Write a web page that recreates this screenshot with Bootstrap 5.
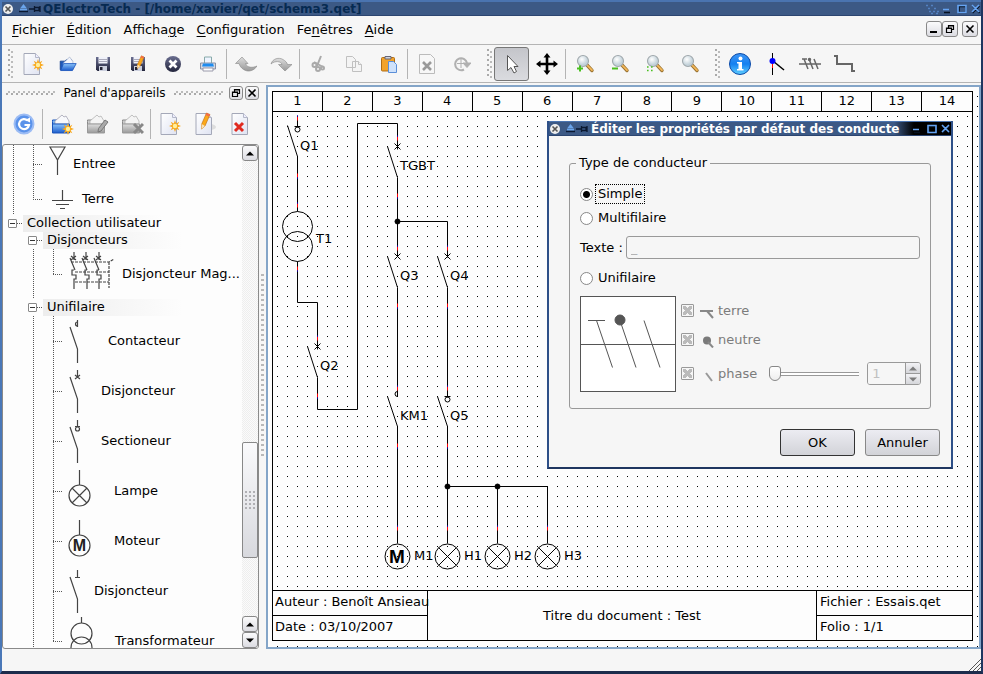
<!DOCTYPE html>
<html lang="fr">
<head>
<meta charset="utf-8">
<meta name="viewport" content="width=device-width, initial-scale=1">
<title>QElectroTech</title>
<link href="https://cdn.jsdelivr.net/npm/bootstrap@5.3.0/dist/css/bootstrap.min.css" rel="stylesheet">
<style>
  body { font-family: "DejaVu Sans", sans-serif; font-size: 13px; line-height: 16px; color: #000; background: #f6f6f6; }
  button { font: inherit; color: inherit; }
  .app-window { border: solid #4a78b8; border-width: 0 2px 3px; border-right-color: #1f3660; border-bottom-color: #1c2c4c; }
  .titlebar { height: 16px; flex: none; background: #3c5985; border-top: 2px solid #4a74b0; border-bottom: 1px solid #2c4570; font-weight: 700; font-size: 12px; }
  .titlebar button { border: 0; padding: 0; background: none; line-height: 0; }
  .titlebar svg { flex: none; }
  .app-title { color: #062a52; padding-left: 1px; }
  .menubar { height: 29px; flex: none; border-bottom: 1px solid #b4b4b4; padding-left: 10px; gap: 12px; }
  .menubar a { color: #000; text-decoration: none; }
  .key { text-decoration: underline; text-underline-offset: 2px; }
  .mini { border: 1px solid #888; border-radius: 3px; background: linear-gradient(#fbfbfc, #dcdce2); padding: 0; line-height: 0; flex: none; }
  .mdi { padding: 0 3px 3px 0; }
  .mdi .mini { width: 16px; height: 16px; }
  .toolbar { height: 38px; flex: none; border-bottom: 1px solid #b4b4b4; }
  .tool { width: 35px; height: 34px; border: 1px solid transparent; background: none; padding: 0; border-radius: 3px; flex: none; line-height: 0; }
  .tool.pressed { border-color: #777; background: linear-gradient(#c4c5ca, #dadbdf); }
  .grip { width: 6px; height: 30px; margin: 0 1px 0 8px; flex: none;
    background: radial-gradient(circle at 1px 1px, #aaa 1px, transparent 1px) 0 0/6px 5px, radial-gradient(circle at 4px 3px, #bbb 1px, transparent 1px) 0 0/6px 5px; }
  .grip:first-child { margin-left: 6px; }
  .sep { width: 1px; height: 30px; background: #b4b4b4; margin: 0 1px; flex: none; }
  .work { flex: 1 1 0; min-height: 0; }
  .dock { width: 257px; flex: none; }
  .dock-head { height: 20px; flex: none; gap: 2px; }
  .dock-head .mini { width: 14px; height: 14px; }
  .dock-name { font-size: 12px; padding: 0 6px; }
  .hatch { height: 5px; background: radial-gradient(circle at 1px 3px, #aaa 1px, transparent 1px) 0 0/5px 5px, radial-gradient(circle at 3px 1px, #bbb 1px, transparent 1px) 0 0/5px 5px; }
  .dock-tools { height: 41px; flex: none; }
  .tree-box { border: 1px solid #8a8a8a; border-radius: 3px; background: #fdfdfd; flex: 1 1 0; min-height: 0; }
  .tree-row { height: 50px; flex: none; }
  .row-head { height: 17px; }
  .row-head .caption { height: 17px; width: 140px; padding-left: 4px; background: linear-gradient(90deg, #ededed, #fdfdfd); white-space: nowrap; }
  .row-entree { height: 38px; }
  .row-terre { height: 32px; }
  .guide { width: 20px; align-self: stretch; flex: none; background-repeat: no-repeat;
    --v: repeating-linear-gradient(#555 0 1px, transparent 1px 2px);
    --h: repeating-linear-gradient(90deg, #555 0 1px, transparent 1px 2px); }
  .g-line { background-image: var(--v); background-size: 1px 100%; background-position: 10px 0; }
  .g-tee { background-image: var(--v), var(--h); background-size: 1px 100%, 10px 1px; background-position: 10px 0, 10px 50%; }
  .g-end { background-image: var(--v), var(--h); background-size: 1px 50%, 10px 1px; background-position: 10px 0, 10px 50%; }
  .g-box { background-image: var(--h); background-size: 6px 1px; background-position: 14px 50%; display: flex; align-items: center; padding-left: 5px; }
  .fold { width: 9px; height: 9px; border: 1px solid #888; border-radius: 1px; background: #fff; padding: 0; display: flex; align-items: center; justify-content: center; }
  .fold::before { content: ""; width: 5px; height: 1px; background: #333; }
  .sym { fill: none; stroke: #444; stroke-width: 1.2; flex: none; }
  .motor-letter { font-family: "Liberation Sans", sans-serif; font-weight: 700; }
  .scrollbar { width: 16px; flex: none; background: repeating-conic-gradient(#eee 0 25%, #fbfbfb 0 50%) 0 0/2px 2px; }
  .scrollbar button { width: 16px; height: 16px; }
  .thumb { height: 116px; border: 1px solid #888; border-radius: 2px; background: linear-gradient(#fafafc, #d8d9de); }
  .thumb i { width: 12px; height: 20px; background: radial-gradient(circle, #b0b0b4 1px, transparent 1px) 0 0/4px 4px; }
  .g281 { flex: 281 0 0; } .g58 { flex: 58 0 0; }
  .splitter { width: 7px; flex: none; }
  .splitter i { width: 3px; height: 184px; background: repeating-linear-gradient(#b8b8b8 0 2px, transparent 2px 5px); }
  .canvas { border: 2px solid #84a5c8; margin-top: 2px; padding: 4px 6px 6px 4px; min-width: 0;
    background: conic-gradient(from 270deg at 1px 1px, #000 90deg, transparent 0) 9px 9px/10px 10px, #fdfdfd; }
  .folio { border: 1px solid #000; }
  .cols { height: 20px; flex: none; display: grid; grid-template-columns: repeat(14, 1fr); background: #fdfdfd; border-bottom: 1px solid #000; }
  .cols span { text-align: center; border-right: 1px solid #000; line-height: 18px; }
  .cols span:last-child { border: 0; }
  .drawing { flex: 1 1 0; min-height: 0; width: 100%; display: block; }
  .cartouche { height: 50px; flex: none; border-top: 1px solid #000; background: #fdfdfd; }
  .cartouche .cell-a { width: 155px; border-right: 1px solid #000; }
  .cartouche .cell-b { width: 156px; border-left: 1px solid #000; }
  .cartouche .half { height: 24px; line-height: 22px; padding-left: 3px; white-space: nowrap; }
  .cartouche .cell-a .half { padding-left: 2px; }
  .cartouche .half + .half { height: 25px; border-top: 1px solid #000; }
  .statusbar { height: 22px; flex: none; }
  .dialog-window { position: absolute; top: 34px; left: 279px; width: 406px; background: #f6f6f6; border: 2px solid #2e5088; border-top: 0; border-bottom-color: #1f3660; }
  .dialog-window .titlebar { border-top-width: 1px; height: 15px; background: linear-gradient(90deg, #3c5985 345px, #000 365px); color: #fff; }
  .dialog-title { padding-left: 2px; white-space: nowrap; }
  .dialog-body { padding: 19px 11px 11px 20px; }
  .group { position: relative; border: 1px solid #999; border-radius: 3px; margin: 8px 9px 20px 0; padding: 14px 10px 15px; }
  .group legend { position: absolute; top: -9px; left: 6px; width: auto; margin: 0; padding: 0 3px; float: none; font-size: 13px; line-height: 16px; background: #f6f6f6; }
  .choice { height: 24px; gap: 2px; }
  .choice label { padding: 1px 2px; border: 1px dotted transparent; }
  .choice input:checked + label { border-color: #000; }
  .choice input { appearance: none; width: 13px; height: 13px; border: 1px solid #888; border-radius: 50%; background: #fff; margin: 0; }
  .choice input:checked { background: radial-gradient(circle, #000 3px, #fff 4px); }
  .text-line { margin: 6px 0 7px; gap: 3px; }
  .text-line input { height: 23px; border: 1px solid #999; border-radius: 3px; background: #f6f6f6; padding: 0 4px; color: #b0b0b0; min-width: 0; }
  .details { margin-top: 6px; }
  .preview { width: 96px; height: 96px; flex: none; }
  .opts { padding-left: 5px; color: #7c7c7c; }
  .opts > div { height: 29px; }
  .opts .phase { height: 39px; }
  .opts input[type=checkbox] { appearance: none; width: 13px; height: 13px; border: 1px solid #999; border-radius: 1px; margin: 0; flex: none;
    background: linear-gradient(45deg, transparent 38%, #bbb 38% 62%, transparent 62%) center/9px 9px no-repeat, linear-gradient(-45deg, transparent 38%, #bbb 38% 62%, transparent 62%) center/9px 9px no-repeat; }
  .opts label { display: flex; align-items: center; }
  .opts label svg { margin: 0 3px 0 5px; }
  .phase input[type=range] { appearance: none; width: 90px; height: 16px; margin: 0 8px 0 12px; background: linear-gradient(#999 0 1px, #fff 1px 3px, #999 3px 4px) 0 6px/100% 4px no-repeat; border-radius: 2px; }
  .phase input[type=range]::-webkit-slider-thumb { appearance: none; width: 12px; height: 15px; background: linear-gradient(#fff, #eee); border: 1px solid #888; border-radius: 3px 3px 6px 6px; }
  .spin { border: 1px solid #999; border-radius: 3px; width: 54px; height: 23px; overflow: hidden; }
  .spin input { appearance: textfield; border: 0; width: 37px; padding: 0 4px; background: #f6f6f6; color: #c0c0c0; }
  .spin input::-webkit-inner-spin-button { display: none; }
  .spin div { width: 16px; border-left: 1px solid #999; }
  .spin button { border: 0; padding: 0; line-height: 0; background: linear-gradient(#f2f2f5, #d5d6da); flex: 1 1 0; display: flex; align-items: center; justify-content: center; }
  .spin button + button { border-top: 1px solid #999; }
  .actions { gap: 10px; }
  .push { width: 75px; height: 27px; border: 1px solid #888; border-radius: 3px; background: linear-gradient(#ececf2, #d2d3d8); padding: 0; }
  .push.main { border-color: #333; }
</style>
<script src="https://cdn.jsdelivr.net/npm/bootstrap@5.3.0/dist/js/bootstrap.bundle.min.js"></script>
</head>
<body>
<svg width="0" height="0" class="position-absolute" aria-hidden="true">
  <defs>
    <linearGradient id="gBlue" x2="0" y2="1"><stop offset="0" stop-color="#8cc4fa"/><stop offset="1" stop-color="#1b5ccc"/></linearGradient>
    <linearGradient id="gInfo" x2="0" y2="1"><stop offset="0" stop-color="#3e95f5"/><stop offset=".5" stop-color="#1480f0"/><stop offset="1" stop-color="#5fd0ff"/></linearGradient>
    <linearGradient id="gDark" x2="0" y2="1"><stop offset="0" stop-color="#6a6e90"/><stop offset="1" stop-color="#23253c"/></linearGradient>
    <linearGradient id="gPage" x2="1" y2="1"><stop offset="0" stop-color="#fff"/><stop offset="1" stop-color="#dfe3f2"/></linearGradient>
    <linearGradient id="gGrey" x2="0" y2="1"><stop offset="0" stop-color="#ddd"/><stop offset="1" stop-color="#999"/></linearGradient>
    <radialGradient id="gGlass" cx=".4" cy=".35"><stop offset="0" stop-color="#fff"/><stop offset="1" stop-color="#c3d2da"/></radialGradient>
    <symbol id="star" viewBox="-6 -6 12 12"><path d="M0-6 1.2-2.6 4.3-4.3 2.7-1.2 6 0 2.7 1.2 4.3 4.3 1.2 2.7 0 6-1.2 2.7-4.3 4.3-2.7 1.2-6 0-2.7-1.2-4.3-4.3-1.2-2.6Z" fill="#f8a81c"/><circle r="2.2" fill="#ffef9c"/></symbol>
    <symbol id="page" viewBox="0 0 22 24"><path d="M2 1.500h11.500l4 4v17h-15.500z" fill="url(#gPage)" stroke="#a4a8b8"/><path d="M13.500 1.500v4h4" fill="#eef" stroke="#b4b8c8"/></symbol>
    <symbol id="folder" viewBox="0 0 22 20"><path d="M1.500 6.500h6l1-1.500h7v12h-14z" fill="#1c58bb" stroke="#123f90"/><path d="M5 9 13 1.500 17 7v4H5z" fill="#f4f6fc" stroke="#8ea0c0" stroke-width=".7"/><path d="M5.500 9.500H21l-4.500 8.500H2z" fill="url(#gBlue)" stroke="#1a55bb"/></symbol>
    <symbol id="cabinet" viewBox="0 0 24 24"><path d="M2.500 9.500V8h7l1 1.500h8v11h-16z" fill="url(#gBlue)" stroke="#1a55bb"/><path d="M5 9 12 3l2 2 2-1 3 5v3H5z" fill="#f8f9fc" stroke="#99a" stroke-width=".7"/><path d="M2.500 12h17v9h-17z" fill="url(#gBlue)" stroke="#1a55bb"/></symbol>
    <symbol id="cabinetGrey" viewBox="0 0 24 24"><path d="M2.500 9.500V8h7l1 1.500h8v11h-16z" fill="#ccc" stroke="#888"/><path d="M5 9 12 3l2 2 2-1 3 5v3H5z" fill="#f4f4f4" stroke="#aaa" stroke-width=".7"/><path d="M2.500 12h17v9h-17z" fill="url(#gGrey)" stroke="#999"/></symbol>
    <symbol id="floppy" viewBox="0 0 18 18"><path d="M2 2h14v14H3.500L2 14.500z" fill="url(#gDark)"/><rect x="4.500" y="2" width="9" height="6.500" fill="#f0f2fa"/><path d="M5 4.500h8M5 6.500h8" stroke="#aab"/><rect x="5" y="11" width="8" height="5" fill="#ccd0de"/><rect x="6" y="12" width="2.500" height="3" fill="#223"/></symbol>
    <symbol id="pencil" viewBox="0 0 12 20"><path d="m7 1 3.500 1.500L5.500 14 2 17l.2-5z" fill="#fba81a" stroke="#b86a10" stroke-width=".6"/><path d="m7 1 3.500 1.500-.8 2L6 3z" fill="#f46b4a"/><path d="m2.200 12 3.300 2L2 17z" fill="#fbe3b8"/></symbol>
    <symbol id="loupe" viewBox="0 0 20 20"><path d="m12 11 5 5.500" stroke="#9a7434" stroke-width="3.400" stroke-linecap="round"/><path d="m12.500 11.500 4.500 4.700" stroke="#f5b95a" stroke-width="1.800" stroke-linecap="round"/><circle cx="8" cy="7" r="5.500" fill="url(#gGlass)" stroke="#a0a8ac" stroke-width="1.100"/></symbol>
    <symbol id="restore" viewBox="0 0 10 10"><path d="M3.500 3.500v-2h5v4h-2M1.500 4h5v4.500h-5zM1 4.500h6M3 2h6" fill="none" stroke="#000" stroke-width="1.200"/></symbol>
    <symbol id="cross" viewBox="0 0 10 10"><path d="m1.500 1.500 7 7m0-7-7 7" stroke="currentColor" stroke-width="1.600"/></symbol>
    <symbol id="wclose" viewBox="0 0 12 12"><circle cx="6" cy="6" r="5" fill="#eee"/><path d="m3.500 3.500 5 5m0-5-5 5" stroke="#555" stroke-width="1.600"/></symbol>
    <symbol id="wpins" viewBox="0 0 24 12"><path d="M5.500 1 9 5.500H2zM2 6h7v1.500H2z" fill="#6aa5ec"/><path d="M1 8.500h9" stroke="#0a1830" stroke-width="1.400"/><path d="M11 6h5M16.500 3v6M17 4.500h4v3h-4M22 3v6" stroke="#0a1830" stroke-width="1.300" fill="none"/></symbol>
    <symbol id="wctl" viewBox="0 0 40 12"><g fill="none" stroke-width="1.600"><path d="M3 9.500h6M18 3.500h7v6h-7zM31.500 3l7 7m0-7-7 7" stroke="#051020"/><path d="M2 6.500h6M17 2.500h8v7h-8zM31 2l7 7m0-7-7 7" stroke="#66a4f2"/></g></symbol>
    <symbol id="wspark" viewBox="0 0 16 12"><path d="M1 2.500h2M6 2.500h2M3 5.500h2M9 5.500h2M4 8.500h2M8 8.500h2M12 8.500h2M6 10.500h2M11 10.500h2" stroke="#5d93dc" stroke-width="1.500" opacity=".7"/></symbol>
    <symbol id="up" viewBox="0 0 8 5"><path d="M0 4.500 4 .5l4 4z" fill="currentColor"/></symbol>
    <symbol id="down" viewBox="0 0 8 5"><path d="M0 .5h8l-4 4z" fill="currentColor"/></symbol>
  </defs>
</svg>

<div class="app-window vh-100 d-flex flex-column overflow-hidden">
  <header class="titlebar d-flex align-items-center">
    <button aria-label="Menu de la fenêtre"><svg width="12" height="12"><use href="#wclose"/></svg></button>
    <svg width="24" height="12" class="ms-1"><use href="#wpins"/></svg>
    <span class="app-title text-nowrap flex-grow-1">QElectroTech - [/home/xavier/qet/schema3.qet]</span>
    <svg width="16" height="12"><use href="#wspark"/></svg>
    <button aria-label="Réduire, agrandir, fermer"><svg width="40" height="12"><use href="#wctl"/></svg></button>
  </header>

  <nav class="menubar d-flex align-items-center">
    <a href="#"><span class="key">F</span>ichier</a>
    <a href="#"><span class="key">É</span>dition</a>
    <a href="#">Afficha<span class="key">g</span>e</a>
    <a href="#"><span class="key">C</span>onfiguration</a>
    <a href="#">Fe<span class="key">n</span>êtres</a>
    <a href="#"><span class="key">A</span>ide</a>
    <div class="mdi d-flex ms-auto">
      <button class="mini" aria-label="Réduire"><svg width="10" height="10"><path d="M1 8h7" stroke="#000" stroke-width="2"/></svg></button>
      <button class="mini me-1" aria-label="Restaurer"><svg width="10" height="10"><use href="#restore"/></svg></button>
      <button class="mini" aria-label="Fermer"><svg width="10" height="10"><use href="#cross"/></svg></button>
    </div>
  </nav>

  <div class="toolbar d-flex align-items-center">
    <span class="grip"></span>
    <button class="tool" aria-label="Nouveau"><svg width="22" height="24"><use href="#page"/><use href="#star" x="10" y="7" width="12" height="12"/></svg></button>
    <button class="tool" aria-label="Ouvrir"><svg width="18" height="18"><use href="#folder"/></svg></button>
    <button class="tool" aria-label="Enregistrer"><svg width="18" height="18"><use href="#floppy"/></svg></button>
    <button class="tool" aria-label="Enregistrer sous"><svg width="18" height="18"><use href="#floppy"/><use href="#pencil" x="6" y="0" width="11" height="16"/></svg></button>
    <button class="tool" aria-label="Fermer"><svg width="18" height="18"><circle cx="9" cy="9" r="8" fill="url(#gDark)"/><path d="m5.500 5.500 7 7m0-7-7 7" stroke="#fff" stroke-width="2.800"/></svg></button>
    <button class="tool" aria-label="Imprimer"><svg width="18" height="18"><path d="M5.500 8V2h7v6" fill="#eef4ff" stroke="#8aa"/><path d="M1.500 8h15v6h-15z" fill="#d4d8e2" stroke="#8890a4"/><path d="M4 8.500h10l1 3H3z" fill="#1d8cf0"/><path d="M4 13h10v3H4z" fill="#fff" stroke="#99a"/></svg></button>
    <span class="sep"></span>
    <button class="tool" aria-label="Annuler l'action"><svg width="22" height="18"><path d="M7 2 .5 8.500H4c1.500 5 6.500 8 10.500 7.500 3.500-.5 6-2.500 7.500-5-4 2-10 2-11.500-2.500H13z" fill="url(#gGrey)" stroke="#888" stroke-width=".6"/></svg></button>
    <button class="tool" aria-label="Refaire"><svg width="22" height="18"><path d="M15 16 8.500 9.500H12C11 6 5 5.500 1 9c1.500-5.500 8-7 12-4.500 2.500 1.500 4 3 4.500 5H22z" fill="url(#gGrey)" stroke="#888" stroke-width=".6"/></svg></button>
    <span class="sep"></span>
    <button class="tool" aria-label="Couper"><svg width="18" height="18" fill="none" stroke="#aaa" stroke-width="2"><path d="m11 1-4 10M4 7l9 5"/><circle cx="4.500" cy="10" r="2"/><circle cx="8" cy="14" r="2"/><circle cx="12.500" cy="13" r="1.500"/></svg></button>
    <button class="tool" aria-label="Copier"><svg width="18" height="18" fill="#f4f4f4" stroke="#c0c0c0"><path d="M1.500 1.500h6l3 3v8h-9zM7.500 6.500h6l3 3v7h-9z"/><path d="M13.500 6.500v3h3"/></svg></button>
    <button class="tool" aria-label="Coller"><svg width="18" height="18"><rect x="1.500" y="2.500" width="13" height="13.500" rx="1" fill="#f2a32a" stroke="#b06d14"/><path d="M5 4V1.500h6V4z" fill="#cfd3dc" stroke="#667"/><path d="M8.500 6.500h5l3 3v8h-8z" fill="#cfe2fb" stroke="#5b8fd8"/></svg></button>
    <span class="sep"></span>
    <button class="tool" aria-label="Supprimer"><svg width="18" height="22"><path d="M1.500 1.500h11l4 4v15h-15z" fill="#f7f7f7" stroke="#bbb"/><path d="m5 9 8 8m0-8-8 8" stroke="#999" stroke-width="2.600"/></svg></button>
    <button class="tool" aria-label="Pivoter"><svg width="18" height="18" fill="none" stroke="#b0b0b0"><path d="M11 14.500A6 6 0 1 1 14 8" stroke-width="2"/><path d="M10 8h8l-4 4.500z" fill="#b0b0b0"/><path d="M8 4v9M4 8.500h8"/></svg></button>
    <span class="grip"></span>
    <button class="tool pressed" aria-label="Mode sélection"><svg width="18" height="22"><path d="M4.500 2.500v15l3.500-3 3 5.500 2.500-1.500-2.500-5h4z" fill="#fff" stroke="#555"/></svg></button>
    <button class="tool" aria-label="Mode visualisation"><svg width="24" height="24"><path d="M12 1 8.500 5.500h2.200v5.200H5.500V8.500L1 12l4.500 3.500v-2.200h5.200v5.200H8.500L12 23l3.500-4.500h-2.200v-5.200h5.200v2.200L23 12l-4.500-3.500v2.200h-5.200V5.500h2.200z"/></svg></button>
    <span class="sep"></span>
    <button class="tool" aria-label="Zoom avant"><svg width="20" height="20"><use href="#loupe"/><path d="M2 14.500h6M5 11.500v6" stroke="#4ac020" stroke-width="2"/></svg></button>
    <button class="tool" aria-label="Zoom arrière"><svg width="20" height="20"><use href="#loupe"/><path d="M2 14.500h6" stroke="#4ac020" stroke-width="2"/></svg></button>
    <button class="tool" aria-label="Zoom adapté"><svg width="20" height="20"><use href="#loupe"/><path d="M2 13h6M2 16.500h6" stroke="#4ac020" stroke-width="1.600" stroke-dasharray="1.600 2.400"/></svg></button>
    <button class="tool" aria-label="Pas de zoom"><svg width="20" height="20"><use href="#loupe"/></svg></button>
    <span class="grip"></span>
    <button class="tool" aria-label="Propriétés"><svg width="24" height="24"><circle cx="12" cy="12" r="10.500" fill="url(#gInfo)" stroke="#0b4aa8"/><circle cx="12.500" cy="6.500" r="2" fill="#fff"/><path d="M9 10h5v7h1.500v1.500H9V17h1.500v-5.500H9z" fill="#fff"/></svg></button>
    <button class="tool" aria-label="Déplacer le texte"><svg width="20" height="24"><path d="M7.500 1v22" stroke="#000"/><path d="M7.500 11v5" stroke="#f00"/><path d="m8 9 11 9" stroke="#000" stroke-width="1.500"/><circle cx="7.500" cy="9" r="3" fill="#00f"/></svg></button>
    <button class="tool" aria-label="Conducteur unifilaire"><svg width="22" height="14" fill="none" stroke="#666" stroke-width="1.500"><path d="M0 7h22M3 2h5M5 2l4 10M10 2l4 10M15 2l4 10"/><circle cx="10.500" cy="2.500" r="1" fill="#666"/></svg></button>
    <button class="tool" aria-label="Réinitialiser"><svg width="22" height="20"><path d="M0 2h3v8h15v7h3" fill="none" stroke="#666" stroke-width="2"/></svg></button>
  </div>

  <main class="work d-flex">
    <aside class="dock d-flex flex-column">
      <div class="dock-head d-flex align-items-center">
        <span class="hatch flex-grow-1 ms-1"></span>
        <span class="dock-name">Panel d'appareils</span>
        <span class="hatch flex-grow-1 me-1"></span>
        <button class="mini" aria-label="Détacher"><svg width="10" height="10"><use href="#restore"/></svg></button>
        <button class="mini" aria-label="Fermer le panel"><svg width="10" height="10"><use href="#cross"/></svg></button>
      </div>
      <div class="dock-tools d-flex align-items-center">
        <button class="tool ms-1" aria-label="Recharger"><svg width="22" height="22"><circle cx="11" cy="11" r="9.500" fill="#5a92ea" stroke="#9cbcf4" stroke-width="2"/><path d="M14.500 7.500A5 5 0 1 0 16 12h-4.500" fill="none" stroke="#fff" stroke-width="2.200"/><path d="m12 7 5 2.500V4.500z" fill="#fff"/></svg></button>
        <span class="sep"></span>
        <button class="tool" aria-label="Nouvelle catégorie"><svg width="24" height="24"><use href="#cabinet"/><use href="#star" x="12" y="11" width="12" height="12"/></svg></button>
        <button class="tool" aria-label="Éditer la catégorie"><svg width="24" height="24"><use href="#cabinetGrey"/><path d="m20 8 3 2-7 9-3 1 .5-3.500z" fill="#aaa" stroke="#777"/></svg></button>
        <button class="tool" aria-label="Supprimer la catégorie"><svg width="24" height="24"><use href="#cabinetGrey"/><path d="m14 12 9 9m0-9-9 9" stroke="#888" stroke-width="3"/></svg></button>
        <span class="sep"></span>
        <button class="tool" aria-label="Nouvel élément"><svg width="22" height="24"><use href="#page"/><use href="#star" x="10" y="8" width="12" height="12"/></svg></button>
        <button class="tool" aria-label="Éditer l'élément"><svg width="22" height="24"><ellipse cx="16" cy="15" rx="6" ry="3" fill="#ddd"/><use href="#page"/><use href="#pencil" x="5" y="0" width="13" height="20"/></svg></button>
        <button class="tool" aria-label="Supprimer l'élément"><svg width="22" height="24"><use href="#page" x="1"/><path d="m6 11 8 8m0-8-8 8" stroke="#e02a20" stroke-width="3"/></svg></button>
      </div>
      <div class="tree-box d-flex overflow-hidden">
        <div class="flex-grow-1 overflow-hidden d-flex flex-column">
          <div class="tree-row row-entree d-flex align-items-center"><span class="guide g-line"></span><span class="guide g-tee"></span>
            <svg class="sym" width="30" height="38"><path d="M7 2h15l-7.500 13zM14.500 15v15"/></svg>Entree</div>
          <div class="tree-row row-terre d-flex align-items-center"><span class="guide g-line"></span><span class="guide g-end"></span>
            <svg class="sym" width="39" height="32"><path d="M19.500 7v10M9 17.500h21M13 21.500h13M17 25.500h5"/></svg>Terre</div>
          <div class="tree-row row-head d-flex"><span class="guide g-box"><button class="fold" aria-label="Replier"></button></span><span class="caption">Collection utilisateur</span></div>
          <div class="tree-row row-head d-flex"><span class="guide"></span><span class="guide g-box"><button class="fold" aria-label="Replier"></button></span><span class="caption">Disjoncteurs</span></div>
          <div class="tree-row d-flex align-items-center"><span class="guide"></span><span class="guide g-line"></span><span class="guide g-end"></span>
            <svg class="sym" width="59" height="50"><path d="M11 3v8M23 3v8M36 3v8M8 7l5 4m0-4-5 4M20 7l5 4m0-4-5 4M33 7l5 4m0-4-5 4M7 9l5 12M19 9l5 12M31 9l5 12M11 21h-2v5h4v4h-2v10M24 21h-2v5h4v4h-2v10M36 21h-2v5h4v4h-2v10"/><path d="M8 13h38l5-3M46 13v26M12 23h34M12 33h34" stroke-dasharray="3 1"/></svg><span class="text-nowrap">Disjoncteur Mag...</span></div>
          <div class="tree-row row-head d-flex"><span class="guide"></span><span class="guide g-box"><button class="fold" aria-label="Replier"></button></span><span class="caption">Unifilaire</span></div>
          <div class="tree-row d-flex align-items-center"><span class="guide"></span><span class="guide g-line"></span><span class="guide g-tee"></span>
            <svg class="sym" width="45" height="50"><path d="M14.500 4v7M14.500 6a2 2 0 1 0 0 4M7 11l7.500 22v14"/></svg>Contacteur</div>
          <div class="tree-row d-flex align-items-center"><span class="guide"></span><span class="guide g-line"></span><span class="guide g-tee"></span>
            <svg class="sym" width="38" height="50"><path d="M14.500 4v7M12 9l5 4m0-4-5 4M7 11l7.500 22v14"/></svg>Disjoncteur</div>
          <div class="tree-row d-flex align-items-center"><span class="guide"></span><span class="guide g-line"></span><span class="guide g-tee"></span>
            <svg class="sym" width="38" height="50"><path d="M14.500 4v7M12 10.500h5M7 11l7.500 22v14"/><circle cx="14.500" cy="13" r="2"/></svg>Sectioneur</div>
          <div class="tree-row d-flex align-items-center"><span class="guide"></span><span class="guide g-line"></span><span class="guide g-tee"></span>
            <svg class="sym" width="51" height="50"><path d="M16.500 4v15M9 22l15 15M24 22 9 37"/><circle cx="16.500" cy="29.500" r="10.500"/></svg>Lampe</div>
          <div class="tree-row d-flex align-items-center"><span class="guide"></span><span class="guide g-line"></span><span class="guide g-tee"></span>
            <svg class="sym" width="51" height="50"><path d="M16.500 4v15"/><circle cx="16.500" cy="29.500" r="10.500"/><text class="motor-letter" x="16.500" y="35" text-anchor="middle" font-size="16" fill="#222" stroke="none">M</text></svg>Moteur</div>
          <div class="tree-row d-flex align-items-center"><span class="guide"></span><span class="guide g-line"></span><span class="guide g-tee"></span>
            <svg class="sym" width="31" height="50"><path d="M14.500 4v7M12 11.500h5M7 11l7.500 22v14"/></svg>Disjoncteur</div>
          <div class="tree-row d-flex align-items-center"><span class="guide"></span><span class="guide g-line"></span><span class="guide g-end"></span>
            <svg class="sym" width="52" height="50"><path d="M18.500 1v6"/><circle cx="18.500" cy="17.500" r="10.500"/><circle cx="18.500" cy="31.500" r="10.500"/></svg>Transformateur</div>
        </div>
        <div class="scrollbar d-flex flex-column">
          <button class="mini" aria-label="Monter"><svg width="8" height="5"><use href="#up"/></svg></button>
          <span class="g281"></span>
          <div class="thumb d-flex align-items-center justify-content-center"><i></i></div>
          <span class="g58"></span>
          <button class="mini" aria-label="Monter"><svg width="8" height="5"><use href="#up"/></svg></button>
          <button class="mini" aria-label="Descendre"><svg width="8" height="5"><use href="#down"/></svg></button>
        </div>
      </div>
    </aside>
    <div class="splitter d-flex align-items-center justify-content-center"><i></i></div>

    <section class="canvas position-relative flex-grow-1 d-flex">
      <div class="folio d-flex flex-column flex-grow-1">
        <div class="cols"><span>1</span><span>2</span><span>3</span><span>4</span><span>5</span><span>6</span><span>7</span><span>8</span><span>9</span><span>10</span><span>11</span><span>12</span><span>13</span><span>14</span></div>
        <svg class="drawing" font-size="13">
          <g transform="translate(-272.5 -111.5)" fill="none" stroke="#000">
            <path d="M297 115v12M294 126h6M287 125l10 31v55M297 261v41h20v47M307 346l10 31v32h40V123h40v26M387 146l10 31v79M397 221h50v36M387 256l10 31v109M437 256l10 31v110M444 396h6M387 396l10 30v117M437 396l10 30v117M447 486h100v57M497 486v57"/>
            <path d="m314 343 6 6m0-6-6 6M394 143l6 6m0-6-6 6M394 253l6 6m0-6-6 6M444 253l6 6m0-6-6 6"/>
            <path d="M397 391a2.500 2.500 0 1 0 0 5"/>
            <circle cx="297" cy="129" r="2.500"/><circle cx="447" cy="399" r="2.500"/>
            <circle cx="297" cy="226" r="15"/><circle cx="297" cy="246" r="15"/>
            <circle cx="397" cy="556" r="12.500"/><circle cx="447" cy="556" r="12.500"/><circle cx="497" cy="556" r="12.500"/><circle cx="547" cy="556" r="12.500"/>
            <path d="m438 547 18 18m0-18-18 18M488 547l18 18m0-18-18 18M538 547l18 18m0-18-18 18"/>
            <path stroke="#f00" d="M297 116v4M297 173v4M297 203v4M297 266v4M317 336v4M317 393v4M397 136v4M397 193v4M397 246v4M447 246v4M397 303v4M447 303v4M397 386v4M447 386v4M397 443v4M447 443v4M397 526v4M447 526v4M497 526v4M547 526v4"/>
            <path stroke="#00f" d="M297 115v1M297 177v1M297 202v1M297 270v1M317 335v1M317 397v1M397 135v1M397 197v1M397 245v1M447 245v1M397 307v1M447 307v1M397 385v1M447 385v1M397 447v1M447 447v1M397 525v1M447 525v1M497 525v1M547 525v1"/>
            <g fill="#000"><circle cx="397" cy="221" r="2.500"/><circle cx="447" cy="486" r="2.500"/><circle cx="497" cy="486" r="2.500"/></g>
          </g>
          <g transform="translate(-273 -112)">
            <text x="300" y="150">Q1</text><text x="316" y="243">T1</text><text x="320" y="370">Q2</text><text x="400" y="170">TGBT</text>
            <text x="400" y="280">Q3</text><text x="450" y="280">Q4</text><text x="400" y="420">KM1</text><text x="450" y="420">Q5</text>
            <text x="414" y="560">M1</text><text x="464" y="560">H1</text><text x="514" y="560">H2</text><text x="564" y="560">H3</text>
            <text class="motor-letter" x="397" y="563" text-anchor="middle" font-size="19">M</text>
          </g>
        </svg>
        <div class="cartouche d-flex">
          <div class="cell-a"><div class="half">Auteur : Benoît Ansieau</div><div class="half">Date : 03/10/2007</div></div>
          <div class="flex-grow-1 d-flex align-items-center justify-content-center">Titre du document : Test</div>
          <div class="cell-b"><div class="half">Fichier : Essais.qet</div><div class="half">Folio : 1/1</div></div>
        </div>
      </div>

      <div class="dialog-window" role="dialog" aria-labelledby="dlgTitle">
        <div class="titlebar d-flex align-items-center">
          <button aria-label="Menu du dialogue"><svg width="12" height="12"><use href="#wclose"/></svg></button>
          <svg width="24" height="12" class="ms-1"><use href="#wpins"/></svg>
          <span id="dlgTitle" class="dialog-title">Éditer les propriétés par défaut des conducte</span>
          <button class="ms-auto" aria-label="Réduire, agrandir, fermer"><svg width="40" height="12"><use href="#wctl"/></svg></button>
        </div>
        <form class="dialog-body">
          <fieldset class="group">
            <legend>Type de conducteur</legend>
            <div class="choice d-flex align-items-center mt-1"><input type="radio" name="kind" id="kSimple" checked><label for="kSimple">Simple</label></div>
            <div class="choice d-flex align-items-center"><input type="radio" name="kind" id="kMulti"><label for="kMulti">Multifilaire</label></div>
            <div class="text-line d-flex align-items-center"><label for="txt">Texte :</label><input id="txt" class="flex-grow-1" type="text" value="_" disabled></div>
            <div class="choice d-flex align-items-center"><input type="radio" name="kind" id="kUni"><label for="kUni">Unifilaire</label></div>
            <div class="details d-flex">
              <svg class="preview" fill="none" stroke="#555"><rect x=".5" y=".5" width="95" height="95" fill="#fff"/><path d="M0 48.500h96M8 24.500h17M16.500 24.500l16 47M40 24.500l16 47M64 24.500l16 47"/><circle cx="40" cy="24" r="5" fill="#555"/></svg>
              <div class="opts flex-grow-1">
                <div class="d-flex align-items-center"><input type="checkbox" id="cT" checked disabled><label for="cT"><svg width="16" height="16" fill="none" stroke="#888" stroke-width="2"><path d="M1 8h13M8 8l6 7"/></svg>terre</label></div>
                <div class="d-flex align-items-center"><input type="checkbox" id="cN" checked disabled><label for="cN"><svg width="16" height="16"><circle cx="8" cy="8.500" r="4" fill="#7a7a7a"/><path d="m9 10 5 5.500" stroke="#888" stroke-width="2"/></svg>neutre</label></div>
                <div class="phase d-flex align-items-center"><input type="checkbox" id="cP" checked disabled><label for="cP"><svg width="16" height="16"><path d="m7 7 6 8" stroke="#999" stroke-width="2"/></svg>phase</label>
                  <input type="range" min="1" max="5" value="1" disabled aria-label="Nombre de phases">
                  <div class="spin d-flex ms-auto"><input type="number" value="1" disabled aria-label="Phases"><div class="d-flex flex-column"><button type="button" disabled aria-label="Plus"><svg width="8" height="5"><use href="#up"/></svg></button><button type="button" disabled aria-label="Moins"><svg width="8" height="5"><use href="#down"/></svg></button></div></div></div>
              </div>
            </div>
          </fieldset>
          <div class="actions d-flex justify-content-end"><button type="button" class="push main">OK</button><button type="button" class="push">Annuler</button></div>
        </form>
      </div>
    </section>
  </main>
  <footer class="statusbar d-flex justify-content-end align-items-end"><svg width="12" height="12" stroke="#555"><path d="M0 12 12 0M4 12l8-8M8 12l4-4"/></svg></footer>
</div>
</body>
</html>
